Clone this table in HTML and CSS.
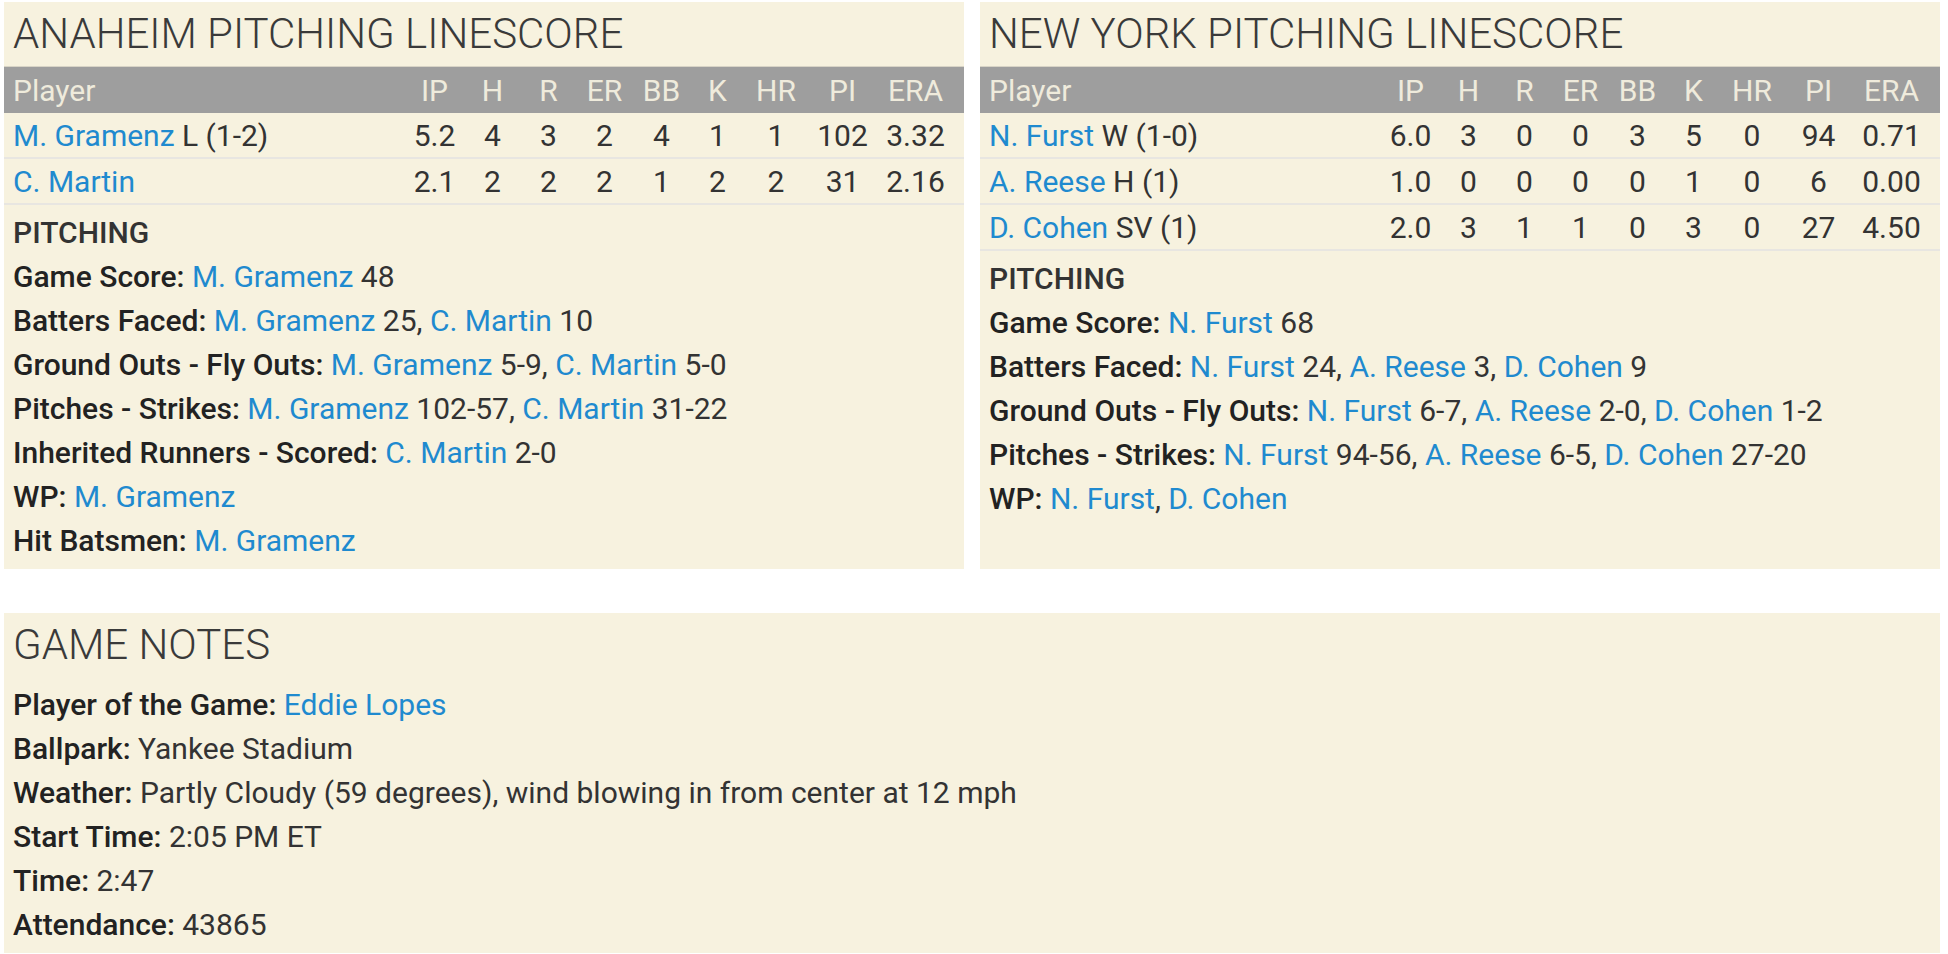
FILE: index.html
```html
<!DOCTYPE html>
<html lang="en">
<head>
    <meta charset="UTF-8">
    <meta name="viewport" content="width=device-width, initial-scale=1.0">
    <title>Anaheim at New York - Box Score</title>
    <link rel="stylesheet" href="styles.css">
</head>
<body>
    <div class="linescores">
        <section class="panel">
            <h2>Anaheim Pitching Linescore</h2>
            <table class="linescore">
                <colgroup>
                    <col>
                    <col class="c-ip"><col class="c-h"><col class="c-r"><col class="c-er"><col class="c-bb">
                    <col class="c-k"><col class="c-hr"><col class="c-pi"><col class="c-era">
                </colgroup>
                <thead>
                    <tr><th class="player">Player</th><th>IP</th><th>H</th><th>R</th><th>ER</th><th>BB</th><th>K</th><th>HR</th><th>PI</th><th>ERA</th></tr>
                </thead>
                <tbody>
                    <tr><td class="player"><a href="#">M. Gramenz</a> L (1-2)</td><td>5.2</td><td>4</td><td>3</td><td>2</td><td>4</td><td>1</td><td>1</td><td>102</td><td>3.32</td></tr>
                    <tr><td class="player"><a href="#">C. Martin</a></td><td>2.1</td><td>2</td><td>2</td><td>2</td><td>1</td><td>2</td><td>2</td><td>31</td><td>2.16</td></tr>
                </tbody>
            </table>
            <div class="notes">
                <p class="notes-title">PITCHING</p>
                <p><b>Game Score:</b> <a href="#">M. Gramenz</a> 48</p>
                <p><b>Batters Faced:</b> <a href="#">M. Gramenz</a> 25, <a href="#">C. Martin</a> 10</p>
                <p><b>Ground Outs - Fly Outs:</b> <a href="#">M. Gramenz</a> 5-9, <a href="#">C. Martin</a> 5-0</p>
                <p><b>Pitches - Strikes:</b> <a href="#">M. Gramenz</a> 102-57, <a href="#">C. Martin</a> 31-22</p>
                <p><b>Inherited Runners - Scored:</b> <a href="#">C. Martin</a> 2-0</p>
                <p><b>WP:</b> <a href="#">M. Gramenz</a></p>
                <p><b>Hit Batsmen:</b> <a href="#">M. Gramenz</a></p>
            </div>
        </section>
        <section class="panel">
            <h2>New York Pitching Linescore</h2>
            <table class="linescore">
                <colgroup>
                    <col>
                    <col class="c-ip"><col class="c-h"><col class="c-r"><col class="c-er"><col class="c-bb">
                    <col class="c-k"><col class="c-hr"><col class="c-pi"><col class="c-era">
                </colgroup>
                <thead>
                    <tr><th class="player">Player</th><th>IP</th><th>H</th><th>R</th><th>ER</th><th>BB</th><th>K</th><th>HR</th><th>PI</th><th>ERA</th></tr>
                </thead>
                <tbody>
                    <tr><td class="player"><a href="#">N. Furst</a> W (1-0)</td><td>6.0</td><td>3</td><td>0</td><td>0</td><td>3</td><td>5</td><td>0</td><td>94</td><td>0.71</td></tr>
                    <tr><td class="player"><a href="#">A. Reese</a> H (1)</td><td>1.0</td><td>0</td><td>0</td><td>0</td><td>0</td><td>1</td><td>0</td><td>6</td><td>0.00</td></tr>
                    <tr><td class="player"><a href="#">D. Cohen</a> SV (1)</td><td>2.0</td><td>3</td><td>1</td><td>1</td><td>0</td><td>3</td><td>0</td><td>27</td><td>4.50</td></tr>
                </tbody>
            </table>
            <div class="notes">
                <p class="notes-title">PITCHING</p>
                <p><b>Game Score:</b> <a href="#">N. Furst</a> 68</p>
                <p><b>Batters Faced:</b> <a href="#">N. Furst</a> 24, <a href="#">A. Reese</a> 3, <a href="#">D. Cohen</a> 9</p>
                <p><b>Ground Outs - Fly Outs:</b> <a href="#">N. Furst</a> 6-7, <a href="#">A. Reese</a> 2-0, <a href="#">D. Cohen</a> 1-2</p>
                <p><b>Pitches - Strikes:</b> <a href="#">N. Furst</a> 94-56, <a href="#">A. Reese</a> 6-5, <a href="#">D. Cohen</a> 27-20</p>
                <p><b>WP:</b> <a href="#">N. Furst</a>, <a href="#">D. Cohen</a></p>
            </div>
        </section>
    </div>
    <section class="panel game-notes">
        <h2>Game Notes</h2>
        <div class="notes">
            <p><b>Player of the Game:</b> <a href="#">Eddie Lopes</a></p>
            <p><b>Ballpark:</b> Yankee Stadium</p>
            <p><b>Weather:</b> Partly Cloudy (59 degrees), wind blowing in from center at 12 mph</p>
            <p><b>Start Time:</b> 2:05 PM ET</p>
            <p><b>Time:</b> 2:47</p>
            <p><b>Attendance:</b> 43865</p>
        </div>
    </section>
</body>
</html>
```

FILE: styles.css
```css
body {
    margin: 0;
    padding: 2px 8px 4px 4px;
    font-family: Roboto, "Noto Sans", sans-serif;
    font-size: 30px;
    color: #333;
    background: #fff;
}
a {
    color: #1f8acf;
    text-decoration: none;
}
.linescores {
    display: grid;
    grid-template-columns: 1fr 1fr;
    gap: 16px;
}
.panel {
    background: #f7f2df;
    padding-bottom: 6px;
}
.panel h2 {
    margin: 0;
    padding-left: 9px;
    font-size: 42px;
    font-weight: 300;
    line-height: 64px;
    color: #3a3a3a;
    text-transform: uppercase;
}
.linescore {
    width: 100%;
    table-layout: fixed;
    border-collapse: collapse;
}
.linescore th,
.linescore td {
    padding: 0;
    text-align: center;
    white-space: nowrap;
}
.linescore th {
    height: 46px;
    background: #9e9e9e;
    color: #efebdc;
    font-weight: 400;
    border-top: 1px solid #d8d4c6;
}
.linescore td {
    height: 44px;
    border-bottom: 2px solid #e8e6e1;
}
.linescore .player {
    text-align: left;
    padding-left: 9px;
}
.linescore th:last-child,
.linescore td:last-child {
    padding-right: 11px;
}
.c-ip { width: 59px; }
.c-h { width: 57px; }
.c-r { width: 55px; }
.c-er { width: 57px; }
.c-bb { width: 57px; }
.c-k { width: 55px; }
.c-hr { width: 62px; }
.c-pi { width: 71px; }
.c-era { width: 86px; }
.notes {
    padding: 6px 9px 0;
}
.notes p {
    margin: 0;
    line-height: 44px;
    color: #333;
}
.notes b,
.notes-title {
    font-weight: 500;
    color: #222;
}
.game-notes {
    margin-top: 44px;
}
```
